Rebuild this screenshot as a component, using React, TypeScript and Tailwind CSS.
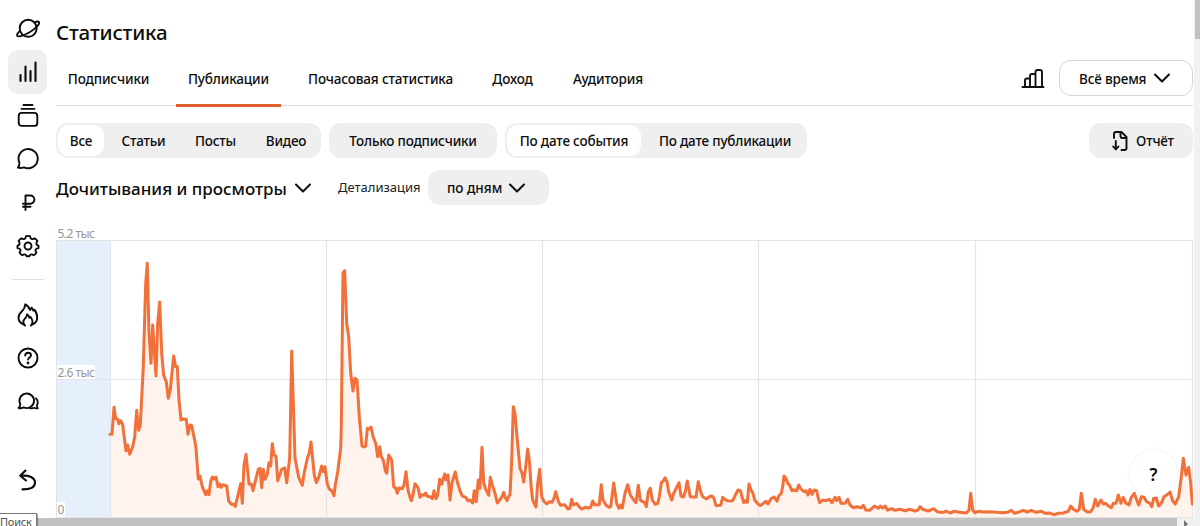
import React from 'react'

// Points are kept in thirds of a pixel, each part has its own origin
const series = [
  {
    x: 50,
    y: 220,
    points:
      '180,643 186,643 192,562 197,595 203,598 207,611 212,602 218,614 228,692 233,675 239,703 248,680 254,650 260,571 266,631 271,614 280,440 287,190 292,130 297,340 303,430 308,315 318,468 323,310 329,246 335,400 341,466 349,485 355,535 361,510 371,408 377,440 382,440 387,540 393,600 398,597 409,598 414,643 420,615 425,617 435,665',
  },
  {
    x: 190,
    y: 340,
    points:
      '18,325 25,417 30,408 37,440 47,464 52,452 57,464 62,425 67,411 72,417 78,411 84,440 89,432 94,442 99,434 110,438 116,483 124,493 130,492 136,499 152,431 157,490 162,375 168,343 177,432 184,432 189,452 205,388 210,385 215,443 220,388 225,418 232,403 237,368 242,378 247,311 252,345 258,348 263,422 275,388 284,383 290,428 299,355 305,33 315,355 326,412 337,436 342,402 352,355 358,338 363,306 373,405 379,428 386,412 395,378 400,395 405,380 412,432 418,447 425,452 432,467 436,435 443,395 452,325',
  },
  {
    x: 320,
    y: 260,
    points:
      '64,500 69,38 74,32 80,190 86,230 92,340 99,393 105,355 111,360 118,470 126,558 132,561 137,558 142,505 148,507 153,501 160,532 167,550 173,590 179,560 184,590 190,600 196,632 200,640 206,585 215,600 221,680 227,684 232,700 237,684 247,686 252,675 258,635 264,690 270,712 274,722 279,705 285,671 294,683 300,712 306,704 312,706 317,699 322,709 330,710 337,716 342,692 348,716 353,705 359,658 365,673 374,642 379,660 384,645 390,720 396,668 406,636 412,665 420,692 427,708 437,712 443,722 450,720 458,729 463,692 469,725 475,660 480,685 486,562 491,668 497,688 506,706 511,652 517,675 525,700 532,729 538,722 546,710 551,697 556,712 561,722 567,708',
  },
  {
    x: 500,
    y: 400,
    points:
      '30,285 35,180 40,20 45,40 52,120 60,205 66,220 71,246 77,200 83,147 88,180 94,265 98,300 108,321 113,250 119,208 125,290 131,303 140,312 148,305 156,307 162,295 167,275 176,307 182,316 194,314 204,327 209,325 215,298 220,315 230,310 238,321 246,327 256,322 264,324 272,322 278,303 284,314 298,314 304,254 309,300 318,315 327,322 332,320 341,249 350,310 357,325 362,315 367,324 375,280 383,254 391,285 400,298 408,308 415,256 421,300 428,305 434,308 439,320 445,275 451,265 457,300 466,313 473,310 478,290 484,248 490,243 495,233 501,245 506,275 515,300 521,280 530,262 537,248 543,288 550,291 556,275 562,243 571,290 578,291 588,291 595,245 602,275 608,290 620,297 628,290 635,288 641,293 648,317 660,316',
  },
  {
    x: 720,
    y: 440,
    points:
      '2,195 8,172 14,178 22,182 30,183 38,182 46,165 54,150 61,152 66,170 71,188 76,182 82,187 87,132 93,150 99,160 104,180 112,190 121,197 130,190 138,184 144,192 154,175 163,171 171,184 176,168 184,160 188,140 192,108 198,115 203,130 208,134 216,152 222,150 230,152 236,135 243,147 252,155 258,152 264,165 270,148 276,163 282,150 290,152 295,175 299,188 308,180 318,182 328,178 336,188 345,172 350,182 357,172 363,190 376,190 383,178 390,195 400,203 410,200 424,203 430,196 437,210 450,211 463,198 475,205 481,198 488,204 496,198 502,210 515,206 525,211 540,208 556,212 570,208 585,213 594,210 600,200 608,208 625,213 641,206 652,215',
  },
  {
    x: 940,
    y: 440,
    points:
      '0,217 12,217 18,213 30,219 42,214 55,216 70,218 80,218 87,210 92,160 98,210 105,218 115,214 130,216 150,215 170,217 190,218 205,216 214,211 224,220 236,216 250,211 262,216 274,211 288,217 304,214 316,220 330,219 341,224 356,220 370,219 385,214 392,198 400,208 410,214 418,208 424,160 431,208 442,216 452,215 460,202 466,178 473,198 483,180 490,192 497,190 505,198 514,203 520,190 528,190 535,165 543,190 550,172 558,190 567,195 574,172 583,160 590,180 596,195 604,170 612,172 620,185 630,190 635,200 642,172 648,172 656,198 664,190 672,170 680,165 690,156 698,182 706,192 716,170 724,110 730,55 738,105 746,82 752,130 757,192',
  },
]

const line = series
  .flatMap((part) =>
    part.points.split(' ').map((p) => {
      const [x, y] = p.split(',').map(Number)
      return `${(part.x + x / 3).toFixed(1)},${(part.y + y / 3).toFixed(1)}`
    })
  )
  .join(' ')

const Icon = ({ children }: { children: React.ReactNode }) => (
  <svg
    width="24"
    height="24"
    viewBox="0 0 24 24"
    fill="none"
    stroke="#0c0c0c"
    strokeWidth="1.9"
    strokeLinecap="round"
    strokeLinejoin="round"
  >
    {children}
  </svg>
)

const Chevron = () => (
  <svg width="18" height="12" viewBox="0 0 18 12" fill="none" stroke="#111" strokeWidth="2.1" strokeLinecap="round" strokeLinejoin="round">
    <path d="M2 2.5l7 7 7-7" />
  </svg>
)

const Item = ({ children, active }: { children: React.ReactNode; active?: boolean }) => (
  <a className={`flex items-center justify-center w-[39px] h-[43.4px] rounded-[10px] ${active ? 'bg-[#efefef]' : ''}`}>
    {children}
  </a>
)

const Sidebar = () => (
  <nav className="flex flex-col items-center w-14 shrink-0 pt-[7px] pr-px">
    <Item>
      <Icon>
        <circle cx="12.2" cy="11.3" r="8.5" />
        <path d="M18.600 5.400c2.500-1.100 4.100-1 4.500-.1.800 1.800-3.600 6.500-9.500 9.900S2.100 20.400 1.200 18.700c-.5-1.100.4-2.800 2.600-4.800" />
      </Icon>
    </Item>
    <Item active>
      <Icon>
        <path strokeWidth="2.1" d="M4.500 21v-6M9.500 21V6.500M14.500 21v-10M19.500 21V2.500" />
      </Icon>
    </Item>
    <Item>
      <Icon>
        <rect x="2.700" y="9.900" width="18.600" height="13" rx="3" />
        <path d="M5.500 5.900h13M7.500 2h9" />
      </Icon>
    </Item>
    <Item>
      <Icon>
        <path d="M3.400 15.600A9.600 9.600 0 1 1 8 20.300c-1.800.7-3.800 1-6.100.4 1.200-1.500 1.700-3 1.500-5.100z" />
      </Icon>
    </Item>
    <Item>
      <Icon>
        <path d="M9.500 20V5.500h4.800a4.100 4.100 0 0 1 0 8.200H7M7 16.700h7.500" />
      </Icon>
    </Item>
    <Item>
      <Icon>
        <circle cx="12" cy="12" r="3.500" />
        <path d="M10 2.100c1.300-.3 2.700-.3 4 0 .2 1.500.7 2.500 1.600 2.900 .9.400 1.900.1 3.100-.7 1.100.7 2 1.600 2.700 2.800-.9 1.100-1.200 2.100-.9 3 .3.900 1.200 1.400 2 1.500v2.400c-1.500.200-2.400.700-2.800 1.600-.4.900-.1 1.900.7 3.100-.7 1-1.600 1.800-2.700 2.500-1.100-.8-2.200-1-3.100-.6-.6.300-1 .9-1.200 1.700h-2.800c-.2-.8-.6-1.400-1.200-1.700-.9-.4-2-.2-3.100.6-1.100-.7-2-1.500-2.700-2.500.8-1.200 1.100-2.200.7-3.100-.4-.9-1.300-1.400-2.800-1.600v-2.400c.8-.1 1.700-.6 2-1.500.3-.9 0-1.900-.9-3C3.300 5.900 4.200 5 5.300 4.300c1.200.8 2.200 1.100 3.100.7.900-.4 1.400-1.400 1.600-2.900z" />
      </Icon>
    </Item>
    <div className="w-8 h-px mt-3 bg-[#dfdfdf]" />
    <div className="pt-[13px]">
      <Item>
        <Icon>
          <path d="M7.500 21.500C1 18.500 1.300 12.500 5.700 8.500 8 6.300 9.100 4.300 9.300 1.300c2.500 1.300 4.100 3.200 4.800 5.700.8-.8 1.200-1.500 1.400-2.400 1 .8 1.500 1.900 1.700 3 .7-.1 1.100-.4 1.500-.8 3.600 6 3.800 11.800-2.300 14.700" />
          <path d="M9 22.500c-2.500-2.700-1.900-5.200.1-7.200 1.300-1.300 1.900-2.500 2-4 1.500.9 2.200 2 2.200 3.500l1.300-.8c2.300 3.300 2.800 6.200.3 8.500" />
        </Icon>
      </Item>
      <Item>
        <Icon>
          <circle cx="12" cy="12" r="9.500" />
          <path d="M9.200 9.500c.1-1.700 1.200-2.700 2.900-2.700s2.900 1 2.900 2.500c0 2-2.900 2.200-2.900 4.200" />
          <circle cx="12" cy="17" r=".5" fill="#111" />
        </Icon>
      </Item>
      <Item>
        <Icon>
          <path d="M4.300 14.200A7.300 7.300 0 1 1 7.700 17.400c-1.600.8-3.200 1-5.100.6 1-1.100 1.600-2.300 1.700-3.800z" />
          <path strokeWidth="1.800" d="M20 8.300c1.900 2 2.200 4.600.9 7 0 1.200.3 2.200.9 3.100-1.500.2-2.600 0-3.700-.6-1.300.6-2.700.7-4.200.4" />
        </Icon>
      </Item>
    </div>
    <div className="pt-[35px]">
      <Item>
        <Icon>
          <path strokeWidth="2.1" d="M9.500 2.500L4.200 7.800l5.800 4.700M5 7.800c8-.8 14 1.600 14 7 0 4.200-4.200 6.600-12.500 6.600" />
        </Icon>
      </Item>
    </div>
  </nav>
)

const Tab = ({ label, width, active }: { label: string; width: string; active?: boolean }) => (
  <button
    className={`${width} h-[57px] -mb-px pt-[4px] whitespace-nowrap border-b-[3px] ${
      active ? 'border-[#e05e2b]' : 'border-transparent'
    }`}
  >
    {label}
  </button>
)

const Chart = () => (
  <div className="w-[1137px] h-[304px]">
    <svg width="1137" height="304" viewBox="56 222 1137 304" className="block">
      <rect x="56" y="240" width="54" height="278" fill="#e5f0fc" />
      <polygon points={`110,518 ${line} 1192.500,518`} fill="#fef3ed" />
      <g stroke="#e4e4e4" strokeWidth="1.200">
        <path d="M56 240.500H1193M56 379.500H1193M56 517.500H1193" />
        <path d="M56.500 240V518M110.500 240V518M326.500 240V518M542.500 240V518M758.500 240V518M975.500 240V518M1192.500 240V518" />
      </g>
      <rect x="57" y="365" width="38" height="14" fill="#fff" />
      <rect x="57" y="502" width="8" height="15" fill="#fff" />
      <g fill="#969696" fontSize="12">
        <text x="57.500" y="238" textLength="37.500">5.2 тыс</text>
        <text x="57.500" y="377" textLength="37.500">2.6 тыс</text>
        <text x="57.500" y="514">0</text>
      </g>
      <polyline points={line} fill="none" stroke="#f2703a" strokeWidth="3" strokeLinejoin="round" strokeLinecap="round" />
    </svg>
  </div>
)

const App = () => {
  return (
    <div className="relative flex w-[1200px] h-[526px] overflow-hidden bg-white text-[#0c0c0c] font-['Noto_Sans','Open_Sans',sans-serif]">
      <Sidebar />

      <main className="w-[1137px] shrink-0">
        <h1 className="h-[50px] pt-[17px] text-[20.500px] leading-[30px] font-medium tracking-[-0.15px]">Статистика</h1>

        {/* Tabs */}
        <div className="flex h-[56px] border-b border-[#dedede] text-[13.500px] font-medium tracking-[-0.15px]">
          <Tab label="Подписчики" width="w-[105px]" />
          <div className="w-[15px]" />
          <Tab label="Публикации" width="w-[105px]" active />
          <div className="w-[15px]" />
          <Tab label="Почасовая статистика" width="w-[169px]" />
          <div className="w-[15px]" />
          <Tab label="Доход" width="w-[65px]" />
          <div className="w-[15px]" />
          <Tab label="Аудитория" width="w-[96px]" />
          <div className="flex items-center ml-auto pt-[1px]">
            <svg width="24" height="22" viewBox="0 0 24 22" className="mr-[14px]" fill="none" stroke="#111" strokeWidth="1.900" strokeLinejoin="round" strokeLinecap="round">
              <path d="M1.500 20h21M4 20v-6.500q0-2 2-2h3M9 20V9q0-2 2-2h3.500M14.500 20V5q0-2 2-2h2.500q2 0 2 2v15M9 11.500V20M14.500 7v13" />
            </svg>
            <button className="flex items-center w-[134px] h-9 pl-[19px] gap-[7px] rounded-[12px] border border-[#d6d6d6] whitespace-nowrap">
              <span className="w-[67px] pt-[2px]">Всё время</span>
              <Chevron />
            </button>
          </div>
        </div>

        {/* Filters */}
        <div className="flex items-center h-[35px] mt-[17px] text-[13.500px] font-medium tracking-[-0.2px] whitespace-nowrap">
          <div className="flex items-center w-[265px] h-[35px] p-[2px] rounded-[12px] bg-[#efefef]">
            <button className="shrink-0 w-[46px] h-[31px] pt-[2px] rounded-[11px] bg-white">Все</button>
            <button className="shrink-0 w-[79px] pt-[2px]">Статьи</button>
            <button className="shrink-0 w-[65px] pt-[2px]">Посты</button>
            <button className="shrink-0 w-[76px] pt-[2px]">Видео</button>
          </div>
          <button className="w-[168px] h-[35px] ml-2 pt-[2px] rounded-[12px] bg-[#efefef]">Только подписчики</button>
          <div className="flex items-center w-[302px] h-[35px] ml-2 p-[2px] rounded-[12px] bg-[#efefef]">
            <button className="shrink-0 w-[134px] h-[31px] pt-[2px] rounded-[11px] bg-white">По дате события</button>
            <button className="shrink-0 w-[168px] pt-[2px]">По дате публикации</button>
          </div>
          <button className="flex items-center w-[104px] h-[35px] ml-auto pl-[23px] gap-[8px] rounded-[12px] bg-[#efefef]">
            <svg width="16" height="22" viewBox="0 0 16 22" fill="none" stroke="#111" strokeWidth="1.900" strokeLinejoin="round" strokeLinecap="round">
              <path d="M2 8V4q0-2 2-2h5.500L14.500 7v11q0 2-2 2h-3M8.500 2.500V6q0 2 2 2h3.500M3.800 11v8M1.200 16.500l2.600 3 2.600-3" />
            </svg>
            <span className="pt-[2px]">Отчёт</span>
          </button>
        </div>

        <div className="flex items-center h-[35px] mt-[12px] whitespace-nowrap">
          <h2 className="w-[231px] pt-[2px] text-[17px] font-medium">Дочитывания и просмотры</h2>
          <div className="ml-[7px]">
            <Chevron />
          </div>
          <span className="w-[82px] ml-[26px] pt-px text-[13px] text-[#222]">Детализация</span>
          <button className="flex items-center w-[121px] h-[35px] ml-2 pl-[19px] gap-[7px] rounded-[12px] bg-[#efefef] text-[13.500px] font-medium">
            <span className="w-[54px] pt-[2px]">по дням</span>
            <Chevron />
          </button>
        </div>

        <div className="mt-[17px]">
          <Chart />
        </div>
      </main>

      {/* Scrollbars */}
      <div className="absolute top-0 right-0 w-[6px] h-[526px] bg-[#f1f1f1]">
        <div className="w-[5px] h-[39px] ml-px bg-[#c1c1c1]" />
      </div>
      <div className="absolute left-0 bottom-0 flex items-center w-full h-2 bg-[#f1f1f1]">
        <div className="w-[1177px] h-2 bg-[#c1c1c1]" />
        <svg width="8" height="8" viewBox="0 0 8 8" className="ml-[6px]">
          <path d="M1 2l4 4-4 4z" fill="#777" />
        </svg>
      </div>

      <button className="absolute left-[1130px] top-[450px] flex items-center justify-center w-[47px] h-[47px] pt-[2px] rounded-full bg-white text-[17px] font-semibold shadow-[0_0_4px_rgba(0,0,0,0.07)]">
        ?
      </button>
      <div className="absolute left-[-1px] top-[513px] w-[38px] h-[16px] border border-[#777] bg-white text-[11px] leading-[16px] tracking-[-0.2px] text-[#555] shadow-[1px_1px_1px_rgba(0,0,0,0.3)]">
        Поиск
      </div>
    </div>
  )
}

export default App
